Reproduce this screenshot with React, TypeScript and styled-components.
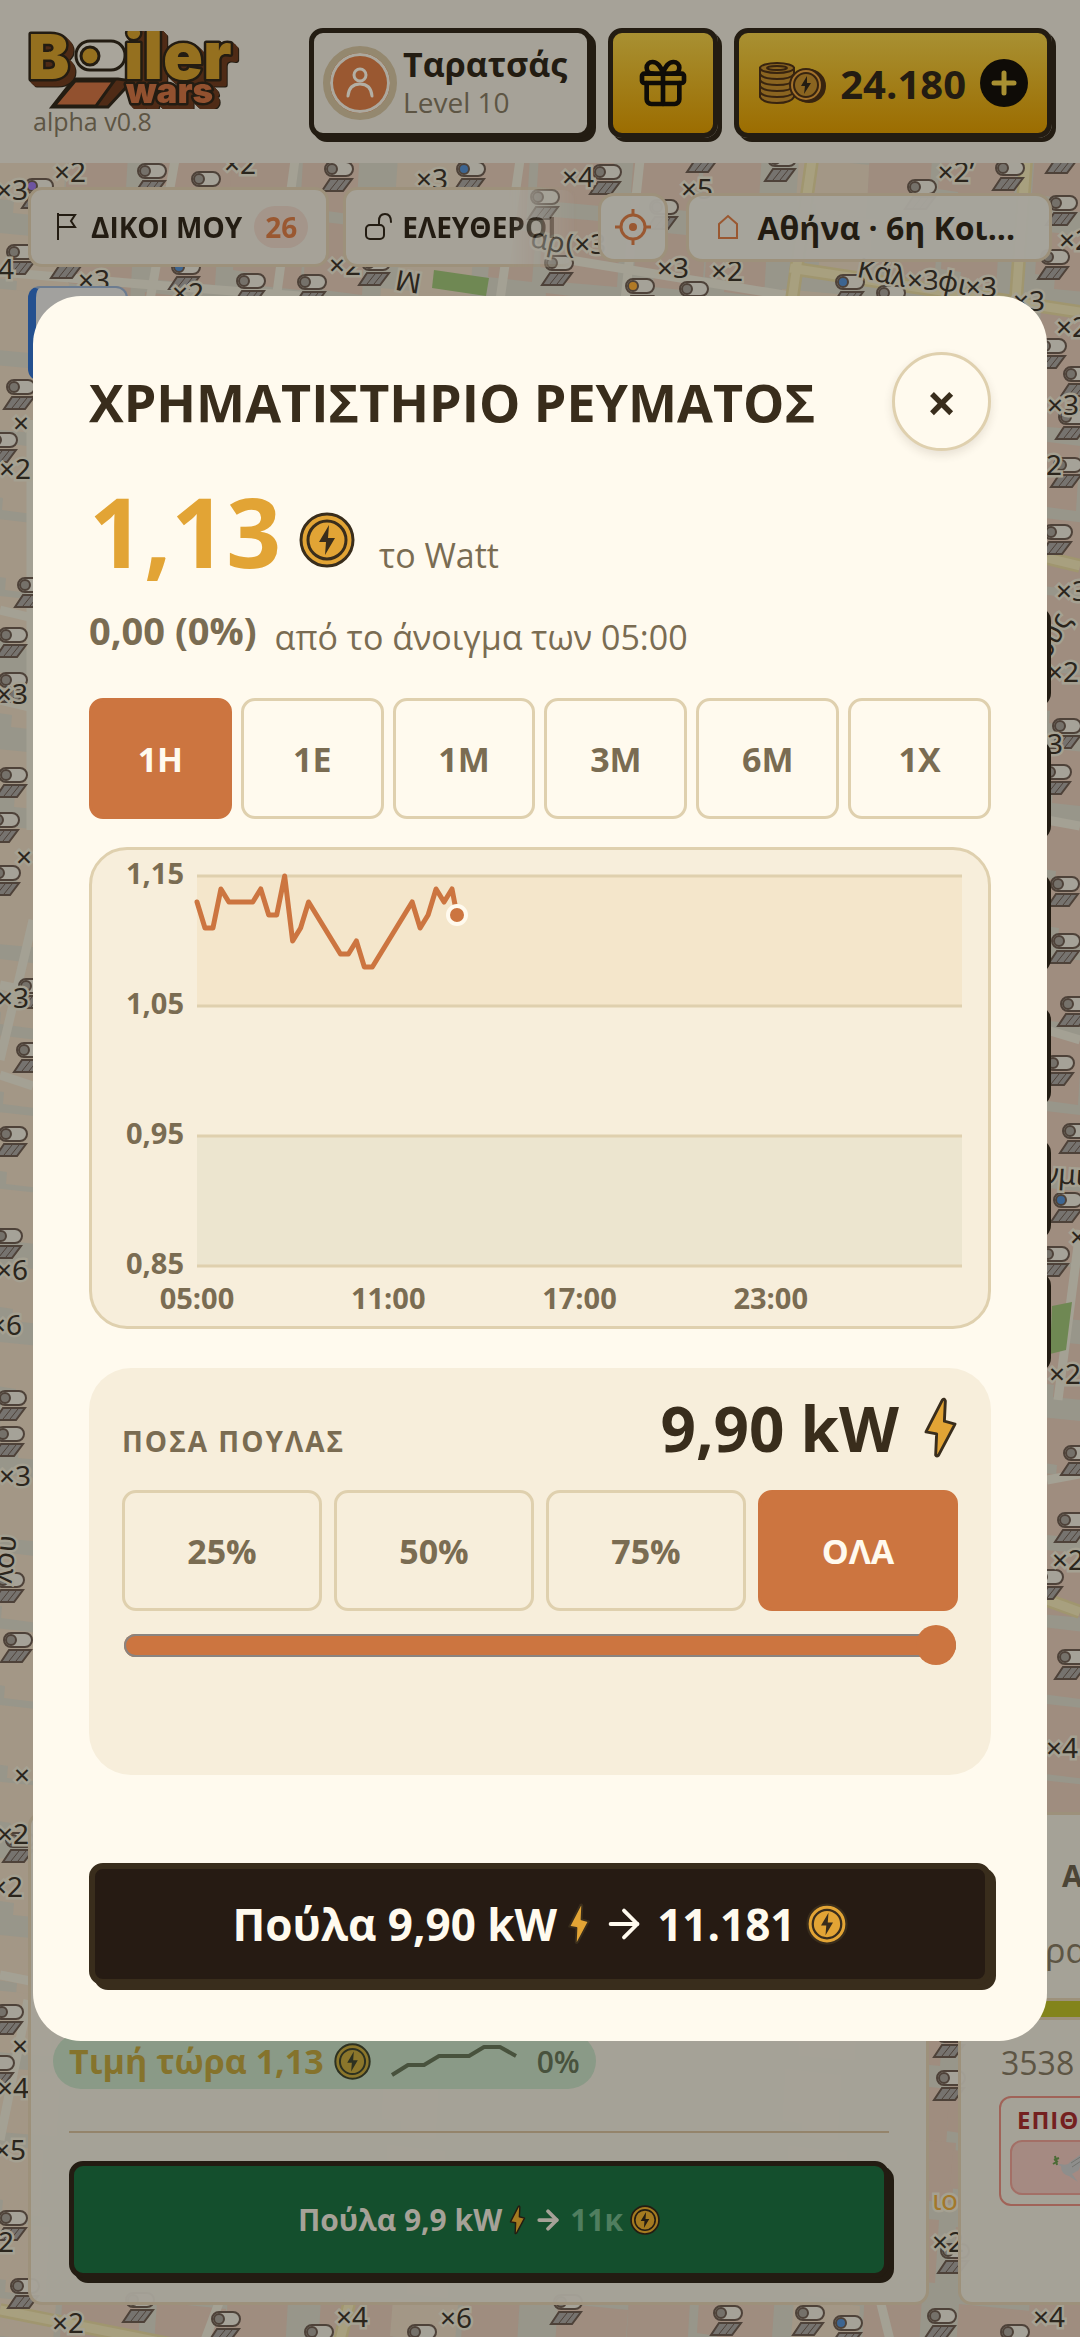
import * as React from "react"
import styled, { createGlobalStyle } from "styled-components"
import { Gift, ArrowRight } from "lucide-react"

const ink = "#392d1c"
const cream = "#fffaee"
const sand = "#f7eedb"
const sandLine = "#dfd0ae"
const muted = "#7a6c52"
const copper = "#cc7540"
const gold = "#e2a435"

// the scene behind the dialog, already dimmed
const dimPaper = "#a6a298"
const dimInk = "#231c12"
const dimLine = "#9d917b"
const dimMuted = "#5d5544"
const dimCopper = "#9a5831"

const GlobalStyle = createGlobalStyle`
    * {
        box-sizing: border-box;
    }
    body {
        margin: 0;
        background: #98968a;
        color: ${ink};
        font-family: "Open Sans", "Noto Sans", sans-serif;
    }
    button {
        margin: 0;
        padding: 0;
        font-family: inherit;
        cursor: pointer;
    }
    svg {
        display: block;
        flex: none;
    }
`

const Page = styled.div`
    position: relative;
    display: flex;
    flex-direction: column;
    min-height: 100vh;
    overflow: hidden;
`

/* ---------- map ---------- */

const MapCanvas = styled.svg`
    position: absolute;
    inset: 0;
    width: 100%;
    height: 100%;
`

const MapLabel = styled.text`
    font-family: "Noto Sans", sans-serif;
    font-size: 28px;
    fill: #2b261d;
    stroke: #a5a192;
    stroke-width: 5px;
    paint-order: stroke;
    text-anchor: middle;
`

type Spot = [number, number, string?]

const heaters: Spot[] = [
    [152, 171], [206, 179], [339, 169], [471, 169, "#3d6591"], [39, 186, "#6d54a0"], [21, 252], [68, 256],
    [186, 267, "#3d6591"], [251, 281], [312, 282], [376, 263], [545, 197], [559, 263], [607, 172],
    [704, 150], [782, 159], [922, 187], [1010, 168], [1063, 151], [1063, 203], [1055, 257],
    [640, 286, "#b07a26"], [694, 289], [850, 282, "#3d6591"], [891, 293], [664, 207],
    [21, 387], [3, 440], [32, 585], [13, 635], [13, 680], [13, 775], [5, 820], [6, 873], [33, 986],
    [31, 1050], [13, 1134], [8, 1236], [12, 1398], [10, 1434], [10, 1580], [18, 1640], [20, 1840],
    [9, 2012], [0, 2063], [13, 2218], [25, 2286],
    [1052, 346], [1078, 374], [1073, 417], [1068, 465], [1058, 532], [1067, 726], [1057, 772],
    [1065, 884], [1066, 941], [1075, 1004], [1060, 1063], [1077, 1131], [1068, 1200, "#3d6591"],
    [1055, 1254], [1078, 1453], [1072, 1520], [1049, 1577], [1072, 1657],
    [951, 2035], [951, 2078], [955, 2251], [140, 2300], [226, 2319], [319, 2332], [422, 2332],
    [568, 2302], [728, 2313], [810, 2313], [848, 2323, "#3d6591"], [942, 2316], [1015, 2332],
]

const counts: [number, number, string][] = [
    [70, 182, "×2"], [12, 200, "×3"], [240, 174, "×2"], [432, 189, "×3"], [6, 279, "4"], [94, 290, "×3"],
    [345, 275, "×2"], [188, 303, "×2"], [578, 187, "×4"], [697, 199, "×5"], [956, 182, "×2’"],
    [673, 278, "×3"], [727, 281, "×2"], [923, 290, "×3"], [981, 297, "×3"], [1029, 311, "×3"],
    [586, 254, "(×3"], [1075, 250, "×2"], [21, 433, "×"], [15, 479, "×2"], [12, 704, "×3"],
    [24, 867, "×"], [13, 1008, "×3"], [12, 1280, "×6"], [6, 1335, "×6"], [15, 1486, "×3"],
    [22, 1785, "×"], [13, 1844, "×2"], [7, 1897, "×2"], [20, 2056, "×"], [13, 2098, "×4"],
    [10, 2160, "×5"], [6, 2252, "2"], [68, 2333, "×2"], [352, 2327, "×4"], [456, 2328, "×6"],
    [948, 2252, "×2"], [1049, 2327, "×4"], [1072, 337, "×2"], [1063, 415, "×3"], [1054, 475, "2"],
    [1072, 601, "×3"], [1063, 682, "×2"], [1055, 754, "3"], [1078, 1247, "×"], [1065, 1384, "×2"],
    [1068, 1570, "×2"], [1062, 1758, "×4"],
]

// a few pixels of wobble so the blocks do not line up
const wobble = (n: number) => (n * 37 + 11) % 23

const Blocks = () => {
    let blocks = []
    for (let row = 0; row < 34; row++) {
        for (let col = 0; col < 15; col++) {
            const n = row * 15 + col
            const x = col * 80 - 20 + wobble(n)
            const y = row * 74 - 10 + wobble(n + 5)
            const w = 56 + wobble(n + 3)
            const h = 50 + wobble(n + 9)
            blocks.push(
                <path
                    key={n}
                    d={`M${x} ${y} l${w} 7 l-4 ${h} l-${w - 20} -5 l1 -12 l-20 -3 z`}
                    fill={n % 5 === 0 ? "#a39786" : "#9f8d7f"}
                />
            )
        }
    }
    return <g>{blocks}</g>
}

const Heater = (props: { x: number, y: number, color?: string }) =>
<g transform={`translate(${props.x} ${props.y})`} stroke="#4e4239" strokeWidth="2">
    <rect x="-14" y="-7" width="28" height="14" rx="7" fill="#a5a298" />
    <circle cx="-7" cy="0" r="5" fill={props.color || "#75716a"} />
    <path d="M-9 10 H13 L4 22 H-17 Z" fill="#76736f" />
    <path d="M-1 11 L-9 21 M6 11 L-2 21" strokeWidth="1" fill="none" />
</g>

const CityMap = () =>
<MapCanvas viewBox="0 0 1080 2337" preserveAspectRatio="xMidYMid slice" aria-hidden="true">
    <rect width="1080" height="2337" fill="#98968a" />
    <Blocks />
    <g fill="none" stroke="#a4a194" strokeWidth="9">
        <path d="M175 160 L150 300 M295 160 L276 300 M520 160 L500 300 M640 160 L625 300" />
        <path d="M0 272 L140 284 L300 296 M570 260 L790 296 M0 610 L33 618 M0 700 L33 708" />
        <path d="M33 920 L0 1060 M0 985 L33 992 M0 1075 L33 1086 M31 420 V830" />
        <path d="M0 1975 L40 1983 M28 2000 L0 2140 M1047 820 L1080 826 M1047 1030 L1080 1040" />
        <path d="M1080 1230 L1058 1400 M1047 1480 L1080 1474 M220 2300 L205 2340 M880 2300 L890 2340" />
    </g>
    <g fill="none" stroke="#a0966f" strokeWidth="14">
        <path d="M812 160 L792 300 M1026 160 L1016 300 M790 268 L1080 312 M1047 558 L1080 566" />
        <path d="M0 2310 L200 2350 M1047 1600 L1080 1612 M350 2300 L340 2340" />
    </g>
    <g fill="none" stroke="#a8a07f" strokeWidth="9">
        <path d="M812 160 L792 300 M1026 160 L1016 300 M790 268 L1080 312 M1047 558 L1080 566" />
        <path d="M0 2310 L200 2350 M1047 1600 L1080 1612 M350 2300 L340 2340" />
    </g>
    <g fill="#6f8853">
        <path d="M434 270 L489 278 L486 296 L432 288 Z" />
        <path d="M1052 1306 L1072 1302 L1066 1350 L1050 1354 Z" />
    </g>
    {heaters.map(([x, y, color], i) => <Heater key={i} x={x} y={y} color={color} />)}
    {counts.map(([x, y, label], i) => <MapLabel key={i} x={x} y={y}>{label}</MapLabel>)}
    <MapLabel transform="translate(546 250) rotate(12)">αρ</MapLabel>
    <MapLabel transform="translate(410 272) rotate(190)">Μ</MapLabel>
    <MapLabel transform="translate(880 282) rotate(12)">Κάλ</MapLabel>
    <MapLabel transform="translate(951 292) rotate(12)">φι</MapLabel>
    <MapLabel transform="translate(1064 1184) rotate(4)">νμι</MapLabel>
    <MapLabel transform="translate(1060 640) rotate(-60)">ους</MapLabel>
    <MapLabel transform="translate(14 1560) rotate(-84)">λου</MapLabel>
    <MapLabel x="945" y="2210" fill="#a3782a" style={{ fill: "#a3782a" }}>ιο</MapLabel>
</MapCanvas>

/* ---------- small drawings ---------- */

const Coin = (props: { size: number, fill?: string, line?: string }) => {
    const { size, fill = gold, line = ink } = props
    return  <svg width={size} height={size} viewBox="0 0 56 56" aria-hidden="true">
                <circle cx="28" cy="28" r="26" fill={fill} stroke={line} strokeWidth="3" />
                <circle cx="28" cy="28" r="19" fill="none" stroke={line} strokeWidth="3" />
                <path d="M30 13 L20 30 H27 L26 43 L36 26 H29 Z" fill={line} />
            </svg>
}

const Bolt = (props: { height: number, fill?: string, line?: string }) => {
    const { height, fill = gold, line = ink } = props
    return  <svg width={Math.round(height * 0.56)} height={height} viewBox="0 0 36 64" aria-hidden="true">
                <path
                    d="M20 3 L3 36 L14 38 L13 60 Q14 62 16 60 L33 28 L22 25 L23 4 Q22 1 20 3 Z"
                    fill={fill}
                    stroke={line}
                    strokeWidth="3"
                    strokeLinejoin="round"
                />
            </svg>
}

const LogoText = styled.text`
    font-family: Inter, sans-serif;
    font-weight: 900;
`
const LogoWords = styled.g`
    fill: #95701f;
    stroke: ${dimInk};
    stroke-width: 5px;
    stroke-linejoin: round;
    paint-order: stroke;
    filter: drop-shadow(2px 2px 0 #4f2b16) drop-shadow(3px 3px 0 #4f2b16) drop-shadow(1px 1px 0 ${dimInk});
`

const Logo = () =>
<svg width="224" height="78" viewBox="0 0 224 78" role="img" aria-label="Boiler wars">
    <path d="M46 48 H90 L104 50 L80 76 H24 Z" fill="#4f2b16" stroke={dimInk} strokeWidth="3" />
    <path d="M47 50 H86 L68 75 H26 Z" fill="#92512f" stroke={dimInk} strokeWidth="3" />
    <LogoWords>
        <LogoText x="98" y="72" fontSize="35" fill="#92512f">wars</LogoText>
        <LogoText x="0" y="48" fontSize="62">B</LogoText>
        <LogoText x="96" y="48" fontSize="66">iler</LogoText>
    </LogoWords>
    <g stroke={dimInk} strokeWidth="3">
        <rect x="48" y="10" width="49" height="29" rx="14" fill="#a9a59b" />
        <circle cx="62" cy="25" r="9" fill="#95701f" />
    </g>
</svg>

const FlagIcon = () =>
<svg width="24" height="30" viewBox="0 0 24 30" fill="none" stroke={dimInk} strokeWidth="2">
    <path d="M3 1 V28 M3 3 H20 L16 9 L20 15 H3" />
</svg>

const UnlockIcon = () =>
<svg width="30" height="30" viewBox="0 0 30 30" fill="none" stroke={dimInk} strokeWidth="2" strokeLinecap="round">
    <rect x="2" y="13" width="18" height="14" rx="4" />
    <path d="M15 13 V9 Q15 2 21 2 Q27 2 27 10" />
</svg>

const HomeIcon = () =>
<svg width="24" height="28" viewBox="0 0 24 28" fill="none" stroke={dimCopper} strokeWidth="2">
    <path d="M3 11 L12 3 L21 11 V25 H3 Z" />
</svg>

const TargetIcon = () =>
<svg width="38" height="38" viewBox="0 0 38 38" fill="none" stroke={dimCopper} strokeWidth="3">
    <circle cx="19" cy="19" r="12" />
    <circle cx="19" cy="19" r="4" fill={dimCopper} stroke="none" />
    <path d="M19 1 V8 M19 30 V37 M1 19 H8 M30 19 H37" />
</svg>

const CoinStack = () =>
<svg width="68" height="44" viewBox="0 0 68 44" fill="#8a6420" stroke="#38240f" strokeWidth="2" aria-hidden="true">
    <path d="M2 7 V36 Q5 42 19 42 Q33 42 36 36 V7 Z" />
    <path d="M2 13 Q5 18 19 18 Q33 18 36 13 M2 19 Q5 24 19 24 Q33 24 36 19 M2 25 Q5 30 19 30 Q33 30 36 25 M2 31 Q5 36 19 36 Q33 36 36 31" fill="none" />
    <ellipse cx="19" cy="7" rx="17" ry="5" />
    <ellipse cx="19" cy="7" rx="10" ry="2" />
    <circle cx="51" cy="25" r="16" fill="#38240f" />
    <circle cx="48" cy="24" r="16" fill="#a3712b" />
    <circle cx="48" cy="24" r="12" />
    <path d="M49 15 L43 25 H47 L46 33 L53 22 H49 Z" fill="#231c12" stroke="none" />
</svg>

const PersonIcon = () =>
<svg width="28" height="32" viewBox="0 0 28 32" fill="none" stroke="#b3afa4" strokeWidth="3" strokeLinecap="round" aria-hidden="true">
    <circle cx="14" cy="8" r="6" />
    <path d="M2 29 Q3 17 14 17 Q25 17 26 29" />
</svg>

/* ---------- header ---------- */

const Header = styled.header`
    position: relative;
    display: flex;
    justify-content: space-between;
    align-items: flex-start;
    padding: 28px 28px 25px;
    background: ${dimPaper};
`
const Brand = styled.div`
    padding-top: 3px;
`
const Version = styled.div`
    padding-left: 5px;
    font-size: 25px;
    line-height: 24px;
    color: ${dimMuted};
`
const HeaderActions = styled.div`
    display: flex;
    gap: 16px;
`
const HeaderButton = styled.button<{ $golden?: boolean }>`
    display: flex;
    align-items: center;
    justify-content: center;
    height: 110px;
    min-width: 110px;
    border: 5px solid ${dimInk};
    border-radius: 14px;
    box-shadow: 4px 4px 0 ${dimInk};
    color: ${dimInk};
    background: ${p => p.$golden ? "linear-gradient(#a89032, #9c6d00)" : dimPaper};
`
const ProfileButton = styled(HeaderButton)`
    justify-content: flex-start;
    gap: 6px;
    padding: 0 20px 0 9px;
    text-align: left;
`
const Avatar = styled.span`
    display: flex;
    align-items: center;
    justify-content: center;
    width: 74px;
    height: 74px;
    border: 7px solid #94886f;
    border-radius: 50%;
    background: ${dimCopper};
    box-shadow: inset 0 0 0 3px #aca89e;
`
const PlayerName = styled.span`
    display: block;
    font-size: 34px;
    font-weight: 700;
    line-height: 38px;
`
const PlayerLevel = styled.span`
    display: block;
    font-size: 28px;
    line-height: 38px;
    color: ${dimMuted};
`
const WalletButton = styled(HeaderButton)`
    gap: 14px;
    padding: 0 19px;
    font-size: 40px;
    font-weight: 700;
`
const Plus = styled.span`
    display: flex;
    align-items: center;
    justify-content: center;
    width: 48px;
    height: 48px;
    border-radius: 50%;
    background: #0f0c07;
`

const TopBar = () =>
<Header>
    <Brand>
        <Logo />
        <Version>alpha v0.8</Version>
    </Brand>
    <HeaderActions>
        <ProfileButton type="button">
            <Avatar><PersonIcon /></Avatar>
            <span>
                <PlayerName>Ταρατσάς</PlayerName>
                <PlayerLevel>Level 10</PlayerLevel>
            </span>
        </ProfileButton>
        <HeaderButton type="button" $golden aria-label="Δώρα">
            <Gift size={56} strokeWidth={2} color="#0f0c07" />
        </HeaderButton>
        <WalletButton type="button" $golden>
            <CoinStack />
            <span>24.180</span>
            <Plus>
                <svg width="26" height="26" viewBox="0 0 26 26" stroke="#a89032" strokeWidth="5" strokeLinecap="round">
                    <path d="M13 3 V23 M3 13 H23" />
                </svg>
            </Plus>
        </WalletButton>
    </HeaderActions>
</Header>

/* ---------- filters ---------- */

const Filters = styled.nav`
    position: relative;
    display: flex;
    align-items: center;
    gap: 18px;
    padding: 24px 28px 0;
`
const ChipScroller = styled.div`
    display: flex;
    flex: 1;
    gap: 14px;
    min-width: 0;
    overflow: hidden;
    mask-image: linear-gradient(90deg, #000 480px, transparent 550px);
`
const Chip = styled.button`
    display: flex;
    flex: none;
    align-items: center;
    gap: 12px;
    height: 80px;
    padding: 0 18px 0 24px;
    border: 3px solid ${dimLine};
    border-radius: 14px;
    background: ${dimPaper};
    color: ${dimInk};
    font-size: 28px;
    font-weight: 700;
`
const OpenChip = styled(Chip)`
    gap: 8px;
    padding-left: 18px;
`
const ChipCount = styled.span`
    padding: 0 11px;
    border-radius: 22px;
    background: #a4958a;
    color: ${dimCopper};
    line-height: 42px;
`
const PlaceButton = styled(Chip)`
    height: 69px;
    padding: 0 34px 0 27px;
    gap: 18px;
    border-radius: 16px;
    background: rgba(167, 164, 156, 0.96);
    font-size: 32px;
`
const LocateButton = styled(PlaceButton)`
    justify-content: center;
    width: 70px;
    padding: 0;
`

const FilterBar = () =>
<Filters>
    <ChipScroller>
        <Chip type="button">
            <FlagIcon />
            ΔΙΚΟΙ ΜΟΥ
            <ChipCount>26</ChipCount>
        </Chip>
        <OpenChip type="button">
            <UnlockIcon />
            ΕΛΕΥΘΕΡΟΙ
        </OpenChip>
    </ChipScroller>
    <LocateButton type="button" aria-label="Η θέση μου"><TargetIcon /></LocateButton>
    <PlaceButton type="button"><HomeIcon />Αθήνα · 6η Κοι...</PlaceButton>
</Filters>

/* ---------- what peeks out round the dialog ---------- */

const Notice = styled.div`
    position: relative;
    width: 100px;
    height: 95px;
    margin: 19px 0 0 28px;
    border: 2px solid #6c7c90;
    border-left: 8px solid #24508f;
    border-radius: 12px;
    background: #a2a19e;
`
const Tools = styled.div`
    position: relative;
    display: flex;
    flex-direction: column;
    align-items: flex-end;
    gap: 33px;
    margin: 226px 29px auto;
`
const Tool = styled.div`
    width: 100px;
    height: 100px;
    border-radius: 14px;
    background: ${dimInk};
`
const CardRow = styled.div`
    position: relative;
    display: flex;
    gap: 29px;
    margin-bottom: 32px;
    padding-left: 28px;
`
const Card = styled.section`
    display: flex;
    flex-direction: column;
    flex: 0 0 calc(100% - 151px);
    height: 493px;
    border: 3px solid ${dimLine};
    border-radius: 14px;
    background: rgba(166, 162, 152, 0.96);
`
const OwnCard = styled(Card)`
    justify-content: flex-end;
    padding: 0 37px 24px 38px;
`
const PricePill = styled.div`
    display: flex;
    align-items: center;
    align-self: flex-start;
    gap: 10px;
    height: 56px;
    margin-left: -16px;
    padding: 0 16px;
    border-radius: 28px;
    background: #8a9a87;
    color: #85732c;
    font-size: 34px;
    font-weight: 700;
`
const PillChange = styled.span`
    color: #48523d;
    font-size: 30px;
    font-weight: 600;
`
const Rule = styled.hr`
    width: 100%;
    margin: 42px 0 28px;
    border: 0;
    border-top: 2px solid #94846b;
`
const QuickSell = styled.button`
    display: flex;
    align-items: center;
    justify-content: center;
    gap: 7px;
    height: 117px;
    border: 5px solid ${dimInk};
    border-radius: 14px;
    box-shadow: 5px 5px 0 ${dimInk};
    background: #144f2d;
    color: ${dimPaper};
    font-size: 30px;
    font-weight: 700;
`
const Earned = styled.span`
    color: #507e5f;
`
const Spark = styled.svg`
    margin: 0 9px;
`
const RivalTop = styled.div`
    padding: 38px 0 0 101px;
    color: #4c4536;
    font-size: 30px;
    font-weight: 700;
    line-height: 46px;
`
const RivalText = styled.div`
    margin: 26px 0 23px 84px;
    color: ${dimMuted};
    font-size: 34px;
    line-height: 50px;
`
const RivalBar = styled.div`
    height: 22px;
    border: solid ${dimLine};
    border-width: 3px 0;
    background: #83841b;
`
const RivalScore = styled.div`
    padding: 18px 40px 0;
    color: ${dimMuted};
    font-size: 32px;
    line-height: 50px;
`
const WishBox = styled.div`
    height: 110px;
    margin: 8px 38px 0;
    padding: 8px 9px;
    border: 2px solid #a06358;
    border-radius: 12px;
`
const WishTitle = styled.div`
    padding-left: 7px;
    color: #74201f;
    font-size: 24px;
    font-weight: 700;
    letter-spacing: 1px;
    line-height: 28px;
`
const WishItem = styled.div`
    display: flex;
    align-items: center;
    height: 55px;
    margin-top: 6px;
    padding-left: 40px;
    border: 2px solid #a36f66;
    border-radius: 12px;
    background: #a58a82;
`

const Rival = () =>
<Card>
    <RivalTop>Α</RivalTop>
    <RivalText>ρα</RivalText>
    <RivalBar />
    <RivalScore>3538</RivalScore>
    <WishBox>
        <WishTitle>ΕΠΙΘ</WishTitle>
        <WishItem>
            <svg width="32" height="32" viewBox="0 0 32 32" aria-hidden="true">
                <path d="M8 12 Q16 14 18 10 L31 1 L27 18 L20 22 L26 30 L17 24 Q9 22 9 14 L5 13 Z" fill="#8e8e8c" />
                <path d="M19 11 L30 4 M20 15 L29 9" stroke="#74746f" strokeWidth="1" />
                <path d="M5 13 L3 4 M2 8 L7 6 M1 12 L6 9" stroke="#4b6b35" strokeWidth="2" />
            </svg>
        </WishItem>
    </WishBox>
</Card>

const Cards = () =>
<CardRow>
    <OwnCard>
        <PricePill>
            Τιμή τώρα 1,13
            <Coin size={37} fill="#8b762b" line="#2d3120" />
            <Spark width="128" height="36" viewBox="0 0 128 36" fill="none" stroke="#48523d" strokeWidth="4" strokeLinejoin="round">
                <path d="M2 32 L18 22 H34 L49 13 H79 L94 4 H110 L126 13" />
            </Spark>
            <PillChange>0%</PillChange>
        </PricePill>
        <Rule />
        <QuickSell type="button">
            Πούλα 9,9 kW
            <Bolt height={30} fill="#a47a20" line={dimInk} />
            <ArrowRight size={30} strokeWidth={3} />
            <Earned>11κ</Earned>
            <Coin size={30} fill="#a47a20" line={dimInk} />
        </QuickSell>
    </OwnCard>
    <Rival />
</CardRow>

/* ---------- exchange dialog ---------- */

const Backdrop = styled.div`
    position: absolute;
    inset: 0;
    display: flex;
    align-items: center;
    padding: 0 33px;
`
const Dialog = styled.section`
    flex: 1;
    min-width: 0;
    padding: 56px;
    border-radius: 48px;
    background: ${cream};
`
const DialogHead = styled.div`
    display: flex;
    align-items: center;
    justify-content: space-between;
`
const Title = styled.h1`
    margin: 0;
    font-size: 52px;
    font-weight: 700;
    line-height: 60px;
`
const CloseButton = styled.button`
    width: 99px;
    height: 99px;
    border: 3px solid ${sandLine};
    border-radius: 50%;
    box-shadow: 0 4px 10px rgba(57, 45, 28, 0.12);
    background: ${cream};
    color: ${ink};
    font-size: 52px;
    font-weight: 700;
    line-height: 93px;
`
const PriceRow = styled.div`
    display: flex;
    align-items: baseline;
    gap: 18px;
    height: 96px;
    margin-top: 32px;
    color: ${muted};
    font-size: 34px;
`
const Price = styled.strong`
    color: ${gold};
    font-size: 96px;
    font-weight: 700;
    line-height: 96px;
`
const Unit = styled.span`
    padding-left: 6px;
`
const ChangeRow = styled.div`
    display: flex;
    align-items: flex-end;
    gap: 18px;
    margin-top: 23px;
    color: ${muted};
    font-size: 34px;
    line-height: 42px;
`
const Change = styled.strong`
    font-size: 38px;
    font-weight: 700;
    line-height: 56px;
`
const Choices = styled.div<{ $gap: number }>`
    display: grid;
    grid-auto-flow: column;
    grid-auto-columns: 1fr;
    gap: ${p => p.$gap}px;
`
const Periods = styled(Choices)`
    margin: 40px 0 28px;
`
const Choice = styled.button<{ $on: boolean }>`
    height: 121px;
    border: 3px solid ${p => p.$on ? copper : sandLine};
    border-radius: 14px;
    background: ${p => p.$on ? copper : "transparent"};
    color: ${p => p.$on ? cream : muted};
    font-size: 34px;
    font-weight: 700;
`
const ChartFrame = styled.figure`
    margin: 0;
    border: 3px solid ${sandLine};
    border-radius: 38px;
    background: ${sand};
`
const ChartText = styled.text`
    fill: ${muted};
    font-size: 29px;
    font-weight: 700;
`
const Amount = styled.div`
    margin: 39px 0 88px;
    padding: 28px 33px 110px;
    border-radius: 42px;
    background: ${sand};
`
const AmountHead = styled.div`
    display: flex;
    align-items: baseline;
    justify-content: space-between;
    margin-bottom: 30px;
    color: ${muted};
    font-size: 28px;
    font-weight: 700;
    letter-spacing: 2px;
`
const AmountValue = styled.output`
    display: flex;
    align-items: center;
    gap: 24px;
    color: ${ink};
    font-size: 62px;
    font-weight: 700;
    letter-spacing: 0;
    line-height: 64px;
`
const Slider = styled.input`
    display: block;
    width: calc(100% - 4px);
    height: 40px;
    margin: 14px 2px 0;
    appearance: none;
    background: transparent;

    &::-webkit-slider-runnable-track {
        height: 23px;
        border-radius: 12px;
        box-shadow: inset 0 0 0 2px #8a8480;
        background: ${copper};
    }
    &::-webkit-slider-thumb {
        appearance: none;
        width: 40px;
        height: 40px;
        margin-top: -9px;
        border-radius: 50%;
        background: ${copper};
    }
`
const SellButton = styled.button`
    display: flex;
    align-items: center;
    justify-content: center;
    gap: 10px;
    width: 100%;
    height: 122px;
    border: 6px solid ${ink};
    border-radius: 14px;
    box-shadow: 5px 5px 0 ${ink};
    background: #261b13;
    color: ${cream};
    font-size: 44px;
    font-weight: 700;
`
const Payout = styled.span`
    display: flex;
    align-items: center;
    gap: 10px;
`

const periods = ["1Η", "1Ε", "1Μ", "3Μ", "6Μ", "1Χ"]
const shares = [25, 50, 75, 100]

// one price each quarter of an hour, from 05:00
const prices = [
    113, 111, 111, 114, 113, 113, 113, 113, 114, 112, 112, 115, 110, 111, 113, 112, 111,
    110, 109, 109, 110, 108, 108, 109, 110, 111, 112, 113, 111, 112, 114, 113, 114,
]

const Chart = () => {
    const left = 105
    const right = 870
    const priceY = (p: number) => 26 + (115 - p) * 13
    const timeX = (quarter: number) => left + quarter * (right - left) / 96
    const points = prices.map((p, i) => `${timeX(i)},${priceY(p)}`)
    points.push(`365,${priceY(112)}`)

    return  <ChartFrame>
                <svg width="100%" viewBox="0 0 896 476" role="img" aria-label="Τιμή ρεύματος">
                    <rect x={left} y={priceY(115)} width={right - left} height="130" fill="#f4e6cb" />
                    <rect x={left} y={priceY(95)} width={right - left} height="130" fill="#ece5cf" />
                    {[115, 105, 95, 85].map(p =>
                        <g key={p}>
                            <path d={`M${left} ${priceY(p)} H${right}`} stroke={sandLine} strokeWidth="3" />
                            <ChartText x="92" y={priceY(p) + 8} textAnchor="end">
                                {(p / 100).toFixed(2).replace(".", ",")}
                            </ChartText>
                        </g>
                    )}
                    {["05:00", "11:00", "17:00", "23:00"].map((t, i) =>
                        <ChartText key={t} x={timeX(i * 24)} y="459" textAnchor="middle">{t}</ChartText>
                    )}
                    <polyline
                        points={points.join(" ")}
                        fill="none"
                        stroke={copper}
                        strokeWidth="5"
                        strokeLinejoin="round"
                        strokeLinecap="round"
                    />
                    <circle cx="365" cy={priceY(112)} r="9" fill={copper} stroke={cream} strokeWidth="4" />
                </svg>
            </ChartFrame>
}

const Exchange = () => {
    const [period, setPeriod] = React.useState("1Η")
    const [share, setShare] = React.useState(100)
    const kw = (9.9 * share / 100).toFixed(2).replace(".", ",")
    const payout = Math.round(11181 * share / 100).toLocaleString("de-DE")

    return  <Backdrop>
                <Dialog role="dialog" aria-labelledby="exchange-title">
                    <DialogHead>
                        <Title id="exchange-title">ΧΡΗΜΑΤΙΣΤΗΡΙΟ ΡΕΥΜΑΤΟΣ</Title>
                        <CloseButton type="button" aria-label="Κλείσιμο">×</CloseButton>
                    </DialogHead>
                    <PriceRow>
                        <Price>1,13</Price>
                        <Coin size={56} />
                        <Unit>το Watt</Unit>
                    </PriceRow>
                    <ChangeRow>
                        <Change>0,00 (0%)</Change>
                        <span>από το άνοιγμα των 05:00</span>
                    </ChangeRow>
                    <Periods $gap={9}>
                        {periods.map(p =>
                            <Choice type="button" key={p} $on={p === period} onClick={() => setPeriod(p)}>{p}</Choice>
                        )}
                    </Periods>
                    <Chart />
                    <Amount>
                        <AmountHead>
                            <label htmlFor="share">ΠΟΣΑ ΠΟΥΛΑΣ</label>
                            <AmountValue htmlFor="share">{kw} kW <Bolt height={62} /></AmountValue>
                        </AmountHead>
                        <Choices $gap={12}>
                            {shares.map(s =>
                                <Choice type="button" key={s} $on={s === share} onClick={() => setShare(s)}>
                                    {s === 100 ? "ΟΛΑ" : s + "%"}
                                </Choice>
                            )}
                        </Choices>
                        <Slider
                            id="share"
                            type="range"
                            min={0}
                            max={100}
                            value={share}
                            onChange={e => setShare(Number(e.target.value))}
                        />
                    </Amount>
                    <SellButton type="button">
                        Πούλα {kw} kW
                        <Bolt height={42} />
                        <ArrowRight size={46} strokeWidth={2} />
                        <Payout>{payout}<Coin size={42} /></Payout>
                    </SellButton>
                </Dialog>
            </Backdrop>
}

const App = () =>
<Page>
    <GlobalStyle />
    <CityMap />
    <TopBar />
    <FilterBar />
    <Notice />
    <Tools>
        {periods.map(p => <Tool key={p} />)}
    </Tools>
    <Cards />
    <Exchange />
</Page>

export default App
